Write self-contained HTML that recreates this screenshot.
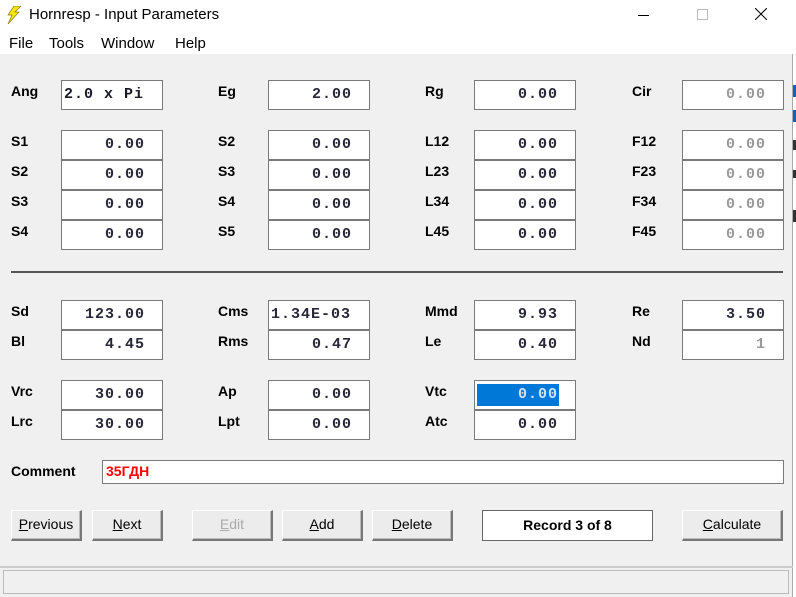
<!DOCTYPE html>
<html><head><meta charset="utf-8"><style>
*{margin:0;padding:0;box-sizing:border-box}
body{width:796px;height:597px;overflow:hidden;background:#fff;font-family:"Liberation Sans",sans-serif;position:relative}
.win{position:absolute;left:0;top:0;width:793px;height:597px;background:#f0f0f0;border-right:1px solid #aaa}
.title{position:absolute;left:0;top:0;width:793px;height:30px;background:#fff}
.title span{position:absolute;left:29px;top:6px;font-size:15px;color:#000}
.menu{position:absolute;left:0;top:30px;width:793px;height:24px;background:#fff;font-size:15px}
.menu span{position:absolute;top:5px}
.l{position:absolute;font-weight:bold;font-size:14px;color:#000}
.b{position:absolute;width:102px;height:30px;background:#fff;border:1px solid #7a7a7a;font-family:"Liberation Mono",monospace;font-weight:bold;font-size:15px;letter-spacing:1px;color:#28283a;text-align:right;padding-right:17px;line-height:27px}
.g{color:#999}
.btn{position:absolute;top:510px;height:31px;background:#ececec;border:1px solid #fff;border-right:2px solid #777;border-bottom:2px solid #777;box-shadow:inset -1px -1px 0 #bbb;font-size:14px;text-align:center;line-height:27px;color:#000}
.btn u{text-decoration:underline}
</style></head><body>
<div style="position:absolute;left:793px;top:0;width:3px;height:597px;background:#fff"></div>
<div style="position:absolute;left:793px;top:85px;width:3px;height:12px;background:#1a5fb4"></div>
<div style="position:absolute;left:793px;top:110px;width:3px;height:12px;background:#1a5fb4"></div>
<div style="position:absolute;left:793px;top:140px;width:3px;height:10px;background:#333"></div>
<div style="position:absolute;left:793px;top:170px;width:3px;height:8px;background:#333"></div>
<div style="position:absolute;left:793px;top:210px;width:3px;height:12px;background:#333"></div>
<div class="win">
<div class="title">
<svg style="position:absolute;left:6px;top:6px" width="16" height="18" viewBox="0 0 16 18"><path d="M8 0 L15 0 L9 6 L13 6 L2 18 L6 9 L2 9 Z" fill="#f5e50a" stroke="#8a7a00" stroke-width="0.7"/></svg>
<span>Hornresp - Input Parameters</span>
<div style="position:absolute;left:638px;top:15px;width:11px;height:1px;background:#000"></div>
<div style="position:absolute;left:697px;top:9px;width:11px;height:11px;border:1px solid #bbb"></div>
<svg style="position:absolute;left:755px;top:8px" width="12" height="12"><path d="M0 0L12 12M12 0L0 12" stroke="#000" stroke-width="1"/></svg>
</div>
<div class="menu"><span style="left:9px">File</span><span style="left:49px">Tools</span><span style="left:101px">Window</span><span style="left:175px">Help</span></div>

<div class="l" style="left:11px;top:83px">Ang</div><div class="b" style="left:61px;top:80px;text-align:left;padding-left:2px;color:#1a1a2a">2.0 x Pi</div>
<div class="l" style="left:218px;top:83px">Eg</div><div class="b" style="left:268px;top:80px">2.00</div>
<div class="l" style="left:425px;top:83px">Rg</div><div class="b" style="left:474px;top:80px">0.00</div>
<div class="l" style="left:632px;top:83px">Cir</div><div class="b g" style="left:682px;top:80px">0.00</div>

<div class="l" style="left:11px;top:133px">S1</div><div class="b" style="left:61px;top:130px">0.00</div>
<div class="l" style="left:11px;top:163px">S2</div><div class="b" style="left:61px;top:160px">0.00</div>
<div class="l" style="left:11px;top:193px">S3</div><div class="b" style="left:61px;top:190px">0.00</div>
<div class="l" style="left:11px;top:223px">S4</div><div class="b" style="left:61px;top:220px">0.00</div>
<div class="l" style="left:218px;top:133px">S2</div><div class="b" style="left:268px;top:130px">0.00</div>
<div class="l" style="left:218px;top:163px">S3</div><div class="b" style="left:268px;top:160px">0.00</div>
<div class="l" style="left:218px;top:193px">S4</div><div class="b" style="left:268px;top:190px">0.00</div>
<div class="l" style="left:218px;top:223px">S5</div><div class="b" style="left:268px;top:220px">0.00</div>
<div class="l" style="left:425px;top:133px">L12</div><div class="b" style="left:474px;top:130px">0.00</div>
<div class="l" style="left:425px;top:163px">L23</div><div class="b" style="left:474px;top:160px">0.00</div>
<div class="l" style="left:425px;top:193px">L34</div><div class="b" style="left:474px;top:190px">0.00</div>
<div class="l" style="left:425px;top:223px">L45</div><div class="b" style="left:474px;top:220px">0.00</div>
<div class="l" style="left:632px;top:133px">F12</div><div class="b g" style="left:682px;top:130px">0.00</div>
<div class="l" style="left:632px;top:163px">F23</div><div class="b g" style="left:682px;top:160px">0.00</div>
<div class="l" style="left:632px;top:193px">F34</div><div class="b g" style="left:682px;top:190px">0.00</div>
<div class="l" style="left:632px;top:223px">F45</div><div class="b g" style="left:682px;top:220px">0.00</div>

<div style="position:absolute;left:11px;top:271px;width:772px;height:2px;background:#555"></div>

<div class="l" style="left:11px;top:303px">Sd</div><div class="b" style="left:61px;top:300px">123.00</div>
<div class="l" style="left:11px;top:333px">Bl</div><div class="b" style="left:61px;top:330px">4.45</div>
<div class="l" style="left:218px;top:303px">Cms</div><div class="b" style="left:268px;top:300px;text-align:left;padding-left:2px">1.34E-03</div>
<div class="l" style="left:218px;top:333px">Rms</div><div class="b" style="left:268px;top:330px">0.47</div>
<div class="l" style="left:425px;top:303px">Mmd</div><div class="b" style="left:474px;top:300px">9.93</div>
<div class="l" style="left:425px;top:333px">Le</div><div class="b" style="left:474px;top:330px">0.40</div>
<div class="l" style="left:632px;top:303px">Re</div><div class="b" style="left:682px;top:300px">3.50</div>
<div class="l" style="left:632px;top:333px">Nd</div><div class="b g" style="left:682px;top:330px">1</div>

<div class="l" style="left:11px;top:383px">Vrc</div><div class="b" style="left:61px;top:380px">30.00</div>
<div class="l" style="left:11px;top:413px">Lrc</div><div class="b" style="left:61px;top:410px">30.00</div>
<div class="l" style="left:218px;top:383px">Ap</div><div class="b" style="left:268px;top:380px">0.00</div>
<div class="l" style="left:218px;top:413px">Lpt</div><div class="b" style="left:268px;top:410px">0.00</div>
<div class="l" style="left:425px;top:383px">Vtc</div><div class="b" style="left:474px;top:380px;padding:0"><div style="position:absolute;left:2px;top:3px;width:82px;height:22px;background:#0078d7;color:#cfe3ff;text-align:right;line-height:22px;padding-right:1px">0.00</div></div>
<div class="l" style="left:425px;top:413px">Atc</div><div class="b" style="left:474px;top:410px">0.00</div>

<div class="l" style="left:11px;top:463px">Comment</div>
<div class="b" style="left:102px;top:460px;width:682px;height:24px;text-align:left;padding-left:3px;font-family:'Liberation Sans','Noto Sans CJK SC',sans-serif;color:#f00;font-size:14px;letter-spacing:0;line-height:21px">35ГДН</div>

<div class="btn" style="left:11px;width:71px"><u>P</u>revious</div>
<div class="btn" style="left:92px;width:71px"><u>N</u>ext</div>
<div class="btn" style="left:192px;width:81px;color:#aaa"><u>E</u>dit</div>
<div class="btn" style="left:282px;width:81px"><u>A</u>dd</div>
<div class="btn" style="left:372px;width:81px"><u>D</u>elete</div>
<div style="position:absolute;left:482px;top:510px;width:171px;height:31px;background:#fff;border:1px solid #666;font-weight:bold;font-size:14px;text-align:center;line-height:29px">Record 3 of 8</div>
<div class="btn" style="left:682px;width:101px"><u>C</u>alculate</div>

<div style="position:absolute;left:0;top:566px;width:793px;height:2px;background:#ccc"></div>
<div style="position:absolute;left:3px;top:570px;width:786px;height:24px;border:1px solid #bbb;background:#f0f0f0"></div>
</div>
</body></html>
